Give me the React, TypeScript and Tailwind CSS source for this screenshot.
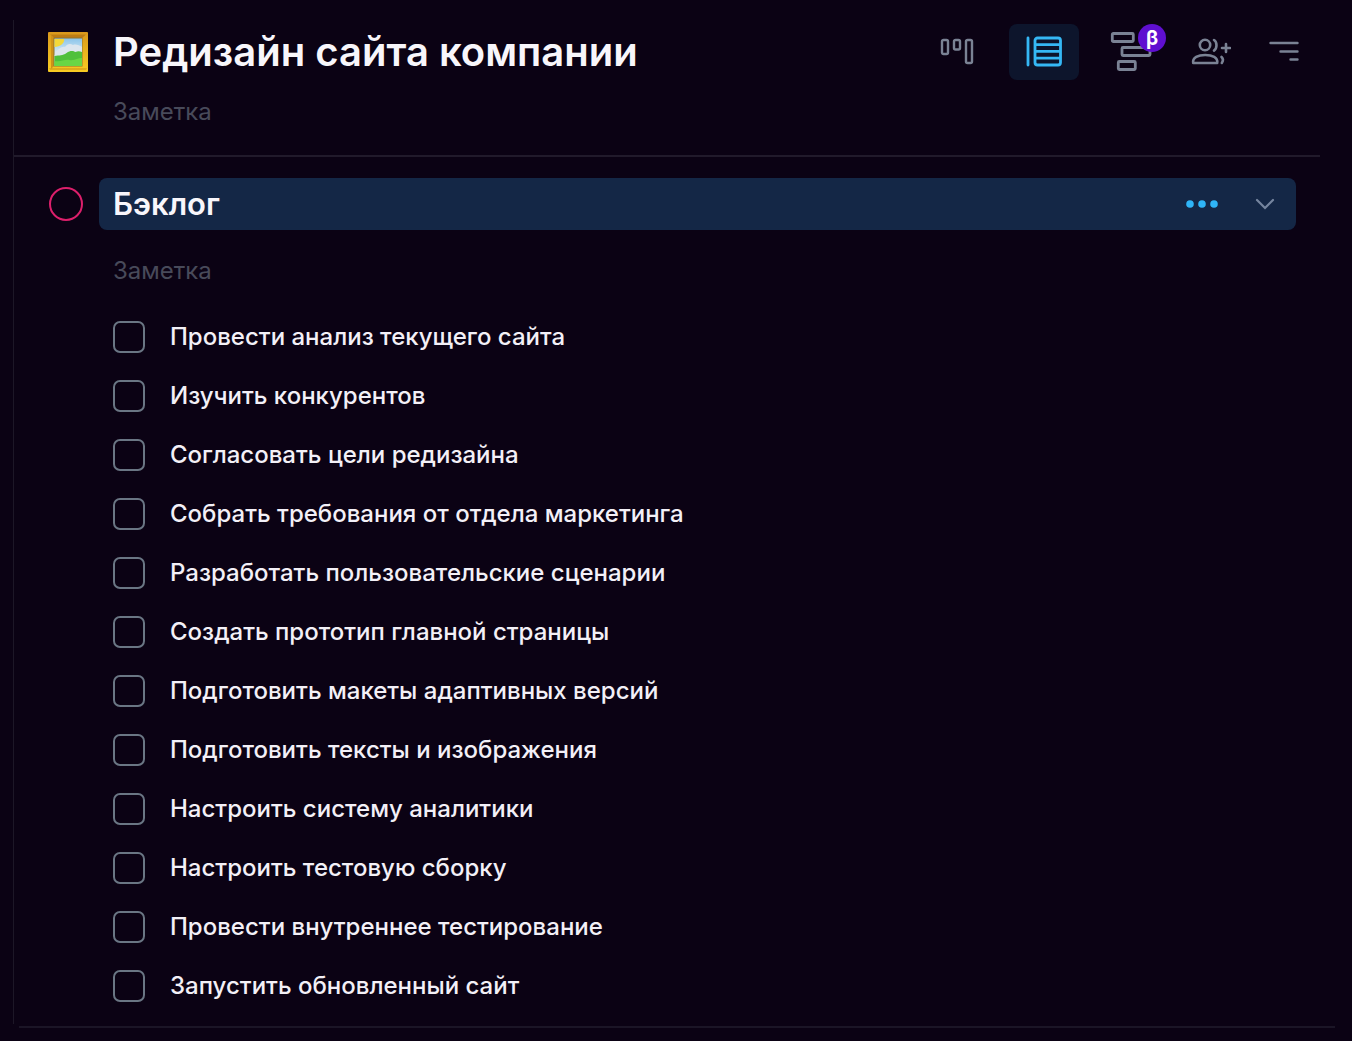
import type { ReactNode } from 'react'

const tasks = [
  'Провести анализ текущего сайта',
  'Изучить конкурентов',
  'Согласовать цели редизайна',
  'Собрать требования от отдела маркетинга',
  'Разработать пользовательские сценарии',
  'Создать прототип главной страницы',
  'Подготовить макеты адаптивных версий',
  'Подготовить тексты и изображения',
  'Настроить систему аналитики',
  'Настроить тестовую сборку',
  'Провести внутреннее тестирование',
  'Запустить обновленный сайт',
]

function PictureEmoji() {
  return (
    <svg width="40" height="40" viewBox="0 0 40 40" className="shrink-0" aria-hidden="true">
      <defs>
        <linearGradient id="frame" x1="0" y1="0" x2="0" y2="1">
          <stop offset="0" stopColor="#d9981c" />
          <stop offset="0.4" stopColor="#e6ae1e" />
          <stop offset="1" stopColor="#f8cc22" />
        </linearGradient>
        <linearGradient id="sky" x1="0" y1="0" x2="0" y2="1">
          <stop offset="0" stopColor="#8cc5ea" />
          <stop offset="0.6" stopColor="#dfeef4" />
        </linearGradient>
      </defs>
      <rect width="40" height="40" rx="1" fill="url(#frame)" />
      <path d="M2 2.500h36L34 6H6z" fill="#bd7c14" />
      <path d="M1 36.500h38l-1 1H2z" fill="#c98d14" />
      <path d="M3 3v34l3-3V6z" fill="#cf9218" />
      <rect x="5.5" y="5.5" width="29" height="29" fill="#8f7330" />
      <rect x="6.5" y="6.5" width="27.5" height="27.5" fill="url(#sky)" />
      <path d="M6.500 7h9.500c1 4-4 8-9.500 8z" fill="#f3d83a" />
      <path d="M8 19c3-1 5-5 9-4 2-3 5-4 8-2 3-1 6 0 9 2v9H6.500z" fill="#dce6ee" />
      <path d="M6.500 24c5-1 8 0 12-3s7-2 9-1c2-1 4-1 6.500 0v14H6.500z" fill="#4fc03c" />
      <path d="M6.500 29c7 1 10-2 15-1s8-2 12.500-2v8H6.500z" fill="#6ad645" />
    </svg>
  )
}

function BoardIcon() {
  return (
    <svg width="34" height="28" viewBox="0 0 34 28" fill="none" stroke="currentColor" strokeWidth="2.4">
      <rect x="2" y="2" width="6" height="14" rx="1.5" />
      <rect x="14" y="2" width="6" height="9.5" rx="1.5" />
      <rect x="26" y="2" width="6" height="23" rx="1.5" />
    </svg>
  )
}

function ListIcon() {
  return (
    <svg width="38" height="32" viewBox="0 0 38 32" fill="none" stroke="currentColor" strokeWidth="2.8">
      <path d="M3 2v27" strokeLinecap="round" />
      <rect x="10" y="2" width="25.5" height="27" rx="2.5" />
      <path d="M10 8.7h25.5M10 15.4h25.5M10 22.2h25.5" />
    </svg>
  )
}

function TimelineIcon() {
  return (
    <svg width="42" height="40" viewBox="0 0 42 40" fill="none" stroke="currentColor" strokeWidth="2.8">
      <rect x="2.3" y="1.5" width="21" height="8" rx="1" />
      <rect x="12" y="15.5" width="28" height="8" rx="1" />
      <rect x="8.3" y="29.5" width="17" height="8" rx="1" />
    </svg>
  )
}

function MembersIcon() {
  return (
    <svg
      width="40"
      height="28"
      viewBox="0 0 40 28"
      fill="none"
      stroke="currentColor"
      strokeWidth="2.6"
      strokeLinecap="round"
    >
      <circle cx="14" cy="7" r="5.2" />
      <path d="M2.2 25c-1-5.5 5-8 12-8s13 2.5 12 8z" strokeLinejoin="round" />
      <path d="M23 2c3.3 2 3.3 8.4 0 10.6M30.5 19c1.6 1.5 1.7 4 .3 6" />
      <path d="M35 6v8M31 10h8" />
    </svg>
  )
}

function SortIcon() {
  return (
    <svg width="32" height="22" viewBox="0 0 32 22" stroke="currentColor" strokeWidth="2.4" strokeLinecap="round">
      <path d="M2.5 2h27M12.5 10.500h17M22.500 18.500h7" />
    </svg>
  )
}

function ToolButton({ label, className, children }: { label: string; className: string; children: ReactNode }) {
  return (
    <button type="button" aria-label={label} className={`flex h-14 items-center justify-center ${className}`}>
      {children}
    </button>
  )
}

function TaskRow({ title }: { title: string }) {
  return (
    <li className="flex h-[59px] items-center">
      <label className="flex items-center gap-[25px]">
        <input
          type="checkbox"
          className="size-8 shrink-0 appearance-none rounded-[7px] border-2 border-[#6a7684] checked:bg-[#2bb3f3]"
        />
        <span className="text-2xl font-medium text-[#f3f0f7]">{title}</span>
      </label>
    </li>
  )
}

export default function App() {
  return (
    <div className="min-h-screen bg-[#0b0214] pt-5 pl-[13px] font-['Inter','Noto_Sans',sans-serif] text-[#f8f6fb]">
      <main className="border-l border-[#1d1727] pr-8 pb-[9px]">
        {/* Project header */}
        <header className="flex items-start justify-between border-b-2 border-[#211a2b] pr-2 pb-[17px] pl-[34px]">
          <div className="flex gap-[25px]">
            <div className="flex h-16 items-center">
              <PictureEmoji />
            </div>
            <div>
              <h1 className="flex h-16 items-center text-[40px] font-semibold whitespace-nowrap">
                Редизайн сайта компании
              </h1>
              <input
                type="text"
                aria-label="Заметка к проекту"
                placeholder="Заметка"
                className="h-[54px] w-full bg-transparent text-2xl outline-none placeholder:text-[#484a5a]"
              />
            </div>
          </div>

          <nav className="flex gap-[17px] pt-1 text-[#7a8294]">
            <ToolButton label="Доска" className="w-[70px]">
              <BoardIcon />
            </ToolButton>
            <ToolButton label="Список" className="w-[70px] rounded-lg bg-[#0d152c] text-[#35b8f5]">
              <ListIcon />
            </ToolButton>
            <ToolButton label="Таймлайн" className="relative w-[70px]">
              <TimelineIcon />
              <span className="absolute top-0 right-0 flex size-7 items-center justify-center rounded-full bg-[#5f0fd0] text-xl font-bold text-white">
                β
              </span>
            </ToolButton>
            <ToolButton label="Участники" className="w-14">
              <MembersIcon />
            </ToolButton>
            <ToolButton label="Сортировка" className="w-14">
              <SortIcon />
            </ToolButton>
          </nav>
        </header>

        {/* Backlog section */}
        <section className="pt-[21px] pr-6 pl-[35px]">
          <div className="flex items-center gap-4">
            <button
              type="button"
              aria-label="Завершить раздел"
              className="size-[34px] shrink-0 rounded-full border-2 border-[#dc1f6b]"
            />
            <div className="flex h-[52px] flex-1 items-center rounded-lg bg-[#142746] pr-5 pl-[14px]">
              <h2 className="flex-1 text-[31px] font-semibold">Бэклог</h2>
              <button type="button" aria-label="Ещё" className="mr-[35px] text-[#2fb5f7]">
                <svg width="34" height="10" viewBox="0 0 34 10" fill="currentColor">
                  <circle cx="5" cy="5" r="3.8" />
                  <circle cx="17" cy="5" r="3.8" />
                  <circle cx="29" cy="5" r="3.8" />
                </svg>
              </button>
              <button type="button" aria-label="Свернуть" className="text-[#75859f]">
                <svg width="22" height="14" viewBox="0 0 22 14" fill="none" stroke="currentColor" strokeWidth="2.2" strokeLinecap="round">
                  <path d="M3 3l8 8 8-8" />
                </svg>
              </button>
            </div>
          </div>

          <div className="pt-[13px] pl-16">
            <input
              type="text"
              aria-label="Заметка к разделу"
              placeholder="Заметка"
              className="h-[54px] w-full bg-transparent text-2xl outline-none placeholder:text-[#484a5a]"
            />
            <ul className="pt-[10px]">
              {tasks.map((task) => (
                <TaskRow key={task} title={task} />
              ))}
            </ul>
          </div>
        </section>
      </main>

      <hr className="mt-0.5 mr-[17px] ml-1.5 border-t-2 border-[#1b1526]" />
    </div>
  )
}
